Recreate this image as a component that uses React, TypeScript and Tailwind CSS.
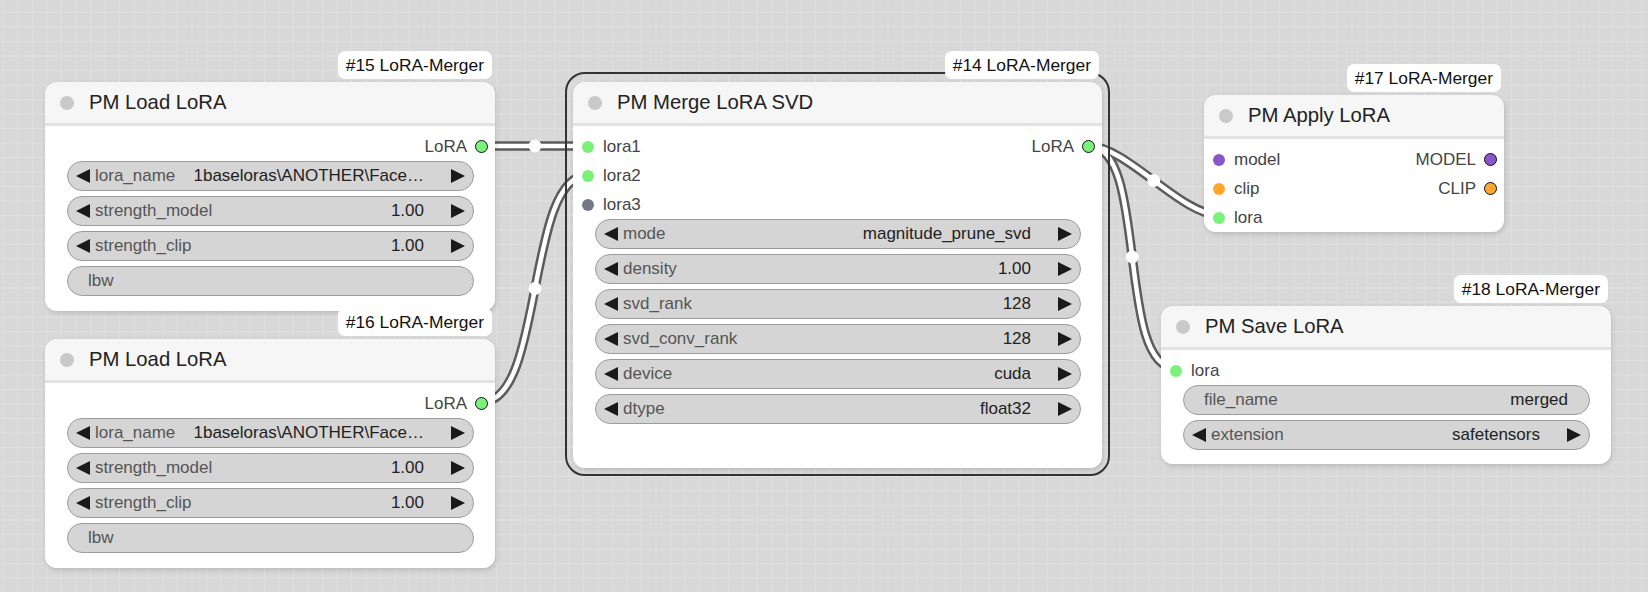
import type { ReactNode } from "react";

interface NodeProps {
  pos: string;
  title: string;
  badge: string;
  selected?: boolean;
  children: ReactNode;
}

function GraphNode({ pos, title, badge, selected, children }: NodeProps): ReactNode {
  return (
    <div className={`absolute flex flex-col rounded-[12px] shadow-[1px_2px_5px_rgba(0,0,0,0.15)] ${pos}`}>
      {selected && (
        <div className="pointer-events-none absolute -top-[10px] -right-[8px] -bottom-[8px] -left-[8px] rounded-[20px] border-2 border-[#333]" />
      )}
      {/* id badge */}
      <div className="absolute right-[3px] bottom-full z-10 mb-[3px] flex h-[28px] items-center whitespace-nowrap rounded-[7px] bg-white px-[8px] text-[17.4px] text-[#111]">
        {badge}
      </div>
      <div className="relative flex h-[44px] items-center rounded-t-[12px] border-b-[3px] border-[#e2e2e2] bg-[#f6f6f6] pl-[15px]">
        <span className="h-[14px] w-[14px] rounded-full bg-[#c9c9c9]" />
        <span className="ml-[15px] text-[20.3px] text-[#222]">{title}</span>
      </div>
      <div className="relative flex flex-1 flex-col rounded-b-[12px] bg-white pt-[6px]">{children}</div>
    </div>
  );
}

interface SlotProps {
  input?: string;
  inputColor?: string;
  output?: string;
  outputColor?: string;
}

function SlotRow({ input, inputColor, output, outputColor }: SlotProps): ReactNode {
  return (
    <div className="flex h-[29px] items-center justify-between text-[17px] text-[#444]">
      {input ? (
        <div className="flex items-center">
          <span className={`ml-[9px] h-[12px] w-[12px] rounded-full ${inputColor}`} />
          <span className="ml-[9px]">{input}</span>
        </div>
      ) : (
        <div />
      )}
      {output && (
        <div className="flex items-center">
          <span>{output}</span>
          <span className={`mr-[7px] ml-[8px] h-[13px] w-[13px] rounded-full border-[1.5px] border-[#111] ${outputColor}`} />
        </div>
      )}
    </div>
  );
}

function Arrow({ dir }: { dir: "l" | "r" }): ReactNode {
  return (
    <svg width="14" height="14" viewBox="0 0 14 14" className="shrink-0">
      <path d={dir === "l" ? "M14 0 L0 7 L14 14 Z" : "M0 0 L14 7 L0 14 Z"} fill="#1a1a1a" />
    </svg>
  );
}

interface WidgetProps {
  label: string;
  value?: string;
  text?: boolean;
}

function Widget({ label, value, text }: WidgetProps): ReactNode {
  if (text) {
    return (
      <div className="mx-[21.5px] flex h-[30px] shrink-0 items-center rounded-full border-[1.5px] border-[#9c9c9c] bg-[#d5d5d5] px-[20.5px] text-[17px]">
        <span className="flex-1 text-[#555]">{label}</span>
        {value && <span className="whitespace-nowrap text-[#222]">{value}</span>}
      </div>
    );
  }
  return (
    <div className="mx-[21.5px] flex h-[30px] shrink-0 items-center rounded-full border-[1.5px] border-[#9c9c9c] bg-[#d5d5d5] pr-[7.5px] pl-[8.5px] text-[17px]">
      <Arrow dir="l" />
      <span className="ml-[5px] flex-1 whitespace-nowrap text-[#555]">{label}</span>
      <span className="mr-[27px] whitespace-nowrap text-[#222]">{value}</span>
      <Arrow dir="r" />
    </div>
  );
}

function Links(): ReactNode {
  const paths = [
    "M482 146 C544.6 146 525.4 146 588 146",
    "M482 402 C544.6 402 525.4 175 588 175",
    "M1089 146 C1125.7 146 1181.8 215 1218.5 215",
    "M1089 146 C1148.6 146 1115.9 368 1175.5 368",
  ];
  const dots = [
    [535, 146],
    [535, 288.5],
    [1153.75, 180.5],
    [1132.25, 257],
  ];
  return (
    <svg className="pointer-events-none absolute inset-0" width="1648" height="592">
      {paths.map((d) => (
        <path key={d + "b"} d={d} fill="none" stroke="#5c5c5c" strokeWidth="9.5" />
      ))}
      {paths.map((d) => (
        <path key={d} d={d} fill="none" stroke="#ffffff" strokeWidth="4.5" />
      ))}
      {dots.map(([cx, cy]) => (
        <circle key={`${cx}-${cy}`} cx={cx} cy={cy} r="6.5" fill="#ffffff" />
      ))}
    </svg>
  );
}

export default function App(): ReactNode {
  return (
    <div className="relative h-[592px] w-[1648px] overflow-hidden bg-[#d8d8d8] bg-[image:linear-gradient(to_right,#e0e0e0_1px,transparent_1px),linear-gradient(to_bottom,#e0e0e0_1px,transparent_1px)] bg-[size:14.5px_14.5px] bg-[position:3px_12px] font-['Liberation_Sans',Arial,sans-serif]">
      <Links />

      <GraphNode pos="left-[45px] top-[82px] w-[450px] h-[229px]" title="PM Load LoRA" badge="#15 LoRA-Merger">
        <SlotRow output="LoRA" outputColor="bg-[#7af27a]" />
        <div className="flex flex-col gap-[5px]">
          <Widget label="lora_name" value="1baseloras\ANOTHER\Face…" />
          <Widget label="strength_model" value="1.00" />
          <Widget label="strength_clip" value="1.00" />
          <Widget label="lbw" text />
        </div>
      </GraphNode>

      <GraphNode pos="left-[45px] top-[339px] w-[450px] h-[229px]" title="PM Load LoRA" badge="#16 LoRA-Merger">
        <SlotRow output="LoRA" outputColor="bg-[#7af27a]" />
        <div className="flex flex-col gap-[5px]">
          <Widget label="lora_name" value="1baseloras\ANOTHER\Face…" />
          <Widget label="strength_model" value="1.00" />
          <Widget label="strength_clip" value="1.00" />
          <Widget label="lbw" text />
        </div>
      </GraphNode>

      <GraphNode pos="left-[573px] top-[82px] w-[529px] h-[386px]" title="PM Merge LoRA SVD" badge="#14 LoRA-Merger" selected>
        <SlotRow input="lora1" inputColor="bg-[#7af27a]" output="LoRA" outputColor="bg-[#7af27a]" />
        <SlotRow input="lora2" inputColor="bg-[#7af27a]" />
        <SlotRow input="lora3" inputColor="bg-[#77778a]" />
        <div className="flex flex-col gap-[5px]">
          <Widget label="mode" value="magnitude_prune_svd" />
          <Widget label="density" value="1.00" />
          <Widget label="svd_rank" value="128" />
          <Widget label="svd_conv_rank" value="128" />
          <Widget label="device" value="cuda" />
          <Widget label="dtype" value="float32" />
        </div>
      </GraphNode>

      <GraphNode pos="left-[1204px] top-[95px] w-[300px] h-[137px]" title="PM Apply LoRA" badge="#17 LoRA-Merger">
        <SlotRow input="model" inputColor="bg-[#8a56cc]" output="MODEL" outputColor="bg-[#8a56cc]" />
        <SlotRow input="clip" inputColor="bg-[#ffa52e]" output="CLIP" outputColor="bg-[#ffa52e]" />
        <SlotRow input="lora" inputColor="bg-[#7af27a]" />
      </GraphNode>

      <GraphNode pos="left-[1161px] top-[306px] w-[450px] h-[158px]" title="PM Save LoRA" badge="#18 LoRA-Merger">
        <SlotRow input="lora" inputColor="bg-[#7af27a]" />
        <div className="flex flex-col gap-[5px]">
          <Widget label="file_name" value="merged" text />
          <Widget label="extension" value="safetensors" />
        </div>
      </GraphNode>
    </div>
  );
}
